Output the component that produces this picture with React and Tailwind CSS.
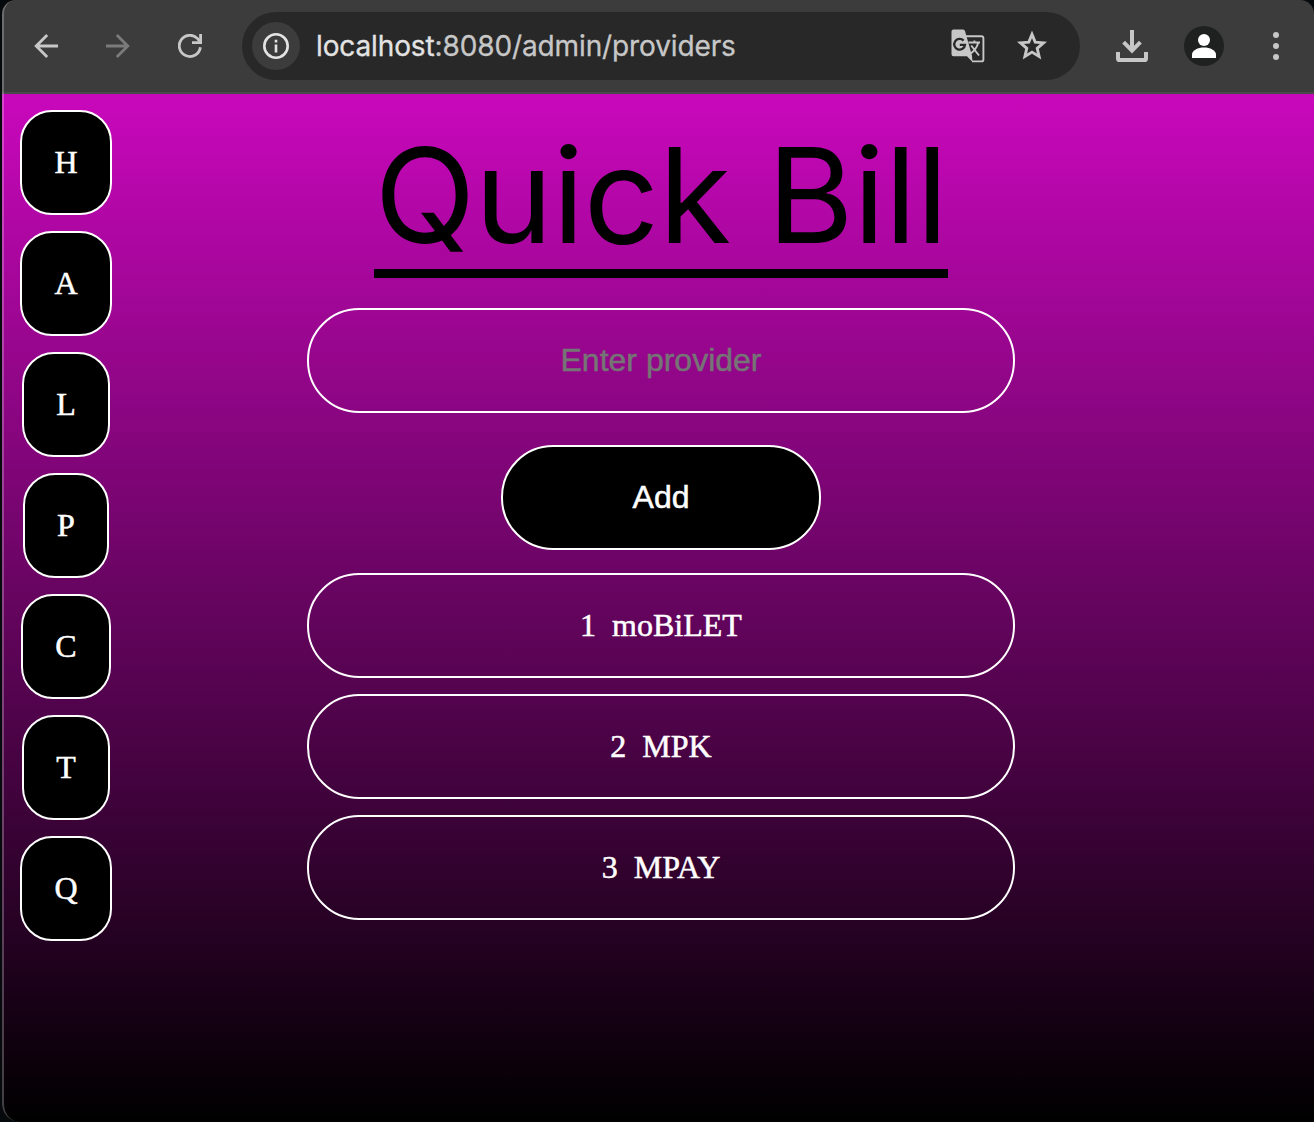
const NAV = ["H", "A", "L", "P", "C", "T", "Q"];
const PROVIDERS = ["moBiLET", "MPK", "MPAY"];

function BackIcon({ className }) {
  return (
    <svg viewBox="0 0 24 24" className={className} fill="none" stroke="currentColor" strokeWidth="2.8">
      <path d="M24 12H2M13.2 1L2.2 12l11 11" />
    </svg>
  );
}

function ReloadIcon() {
  return (
    <svg viewBox="0 0 24 24" className="size-6 text-[#c7c7c7]" fill="none" stroke="currentColor" strokeWidth="2.8">
      <path d="M22.4 13.3A10.6 10.6 0 1 1 19.6 4.600L21.800 7.400" />
      <path d="M22.600 0v8.600H14" />
    </svg>
  );
}

function InfoIcon() {
  return (
    <svg viewBox="0 0 26 26" className="size-[26px]" fill="none" stroke="#e3e3e3" strokeWidth="2.6">
      <circle cx="13" cy="13" r="11.7" />
      <path d="M13 11.6v7.8M13 6.8v2.6" />
    </svg>
  );
}

function TranslateIcon() {
  return (
    <svg viewBox="0 0 34 34" className="size-[34px]" fill="none" stroke="#c7c7c7">
      <path d="M15 7.200h15.400Q32.400 7.200 32.400 9.200v21.200Q32.400 32.400 30.400 32.400H21" strokeWidth="1.900" />
      <path d="M2.500 .5H12q1.500 0 2 1.500l7 24.800.5 6.200-5.500-5.800H2.500Q.5 27.200.5 25.200V2.500Q.5.5 2.500.5z" fill="#c7c7c7" stroke="none" />
      <path d="M12.600 11.600A5.400 5.400 0 1 0 14 15.800H8.800" stroke="#282828" strokeWidth="2.300" />
      <path d="M17.500 13.500h11.500M23.400 11.500v2M27.200 13.700Q25.500 20.500 18.800 25.200M20.200 16.500L28 26.500" strokeWidth="1.900" />
    </svg>
  );
}

function StarIcon() {
  return (
    <svg viewBox="0 0 32 32" className="size-8" fill="none" stroke="#c7c7c7" strokeWidth="2.9" strokeMiterlimit="10">
      <path d="M16 4.400L19.200 12.100L27.500 12.800L21.200 18.300L23.100 26.400L16 22.100L8.900 26.400L10.800 18.300L4.500 12.800L12.800 12.100z" />
    </svg>
  );
}

function DownloadIcon() {
  return (
    <svg viewBox="0 0 32 32" className="size-8" fill="none" stroke="#c7c7c7" strokeWidth="4">
      <path d="M16 0v20M7.6 12.2L16 20.6l8.4-8.4" />
      <path d="M2 22v6.4Q2 30 3.6 30h24.8Q30 30 30 28.4V22" />
    </svg>
  );
}

function Toolbar() {
  return (
    <header className="flex h-[94px] items-center border-b-2 border-[#4a4a4a] bg-[#3c3c3c] pl-8">
      <BackIcon className="size-6 text-[#c7c7c7]" />
      <BackIcon className="ml-12 size-6 rotate-180 text-[#7b7b7b]" />
      <div className="ml-12">
        <ReloadIcon />
      </div>
      <div className="ml-10 flex h-[68px] w-[838px] items-center rounded-full bg-[#282828] pl-2.5">
        <div className="flex size-12 items-center justify-center rounded-full bg-[#3c3c3c]">
          <InfoIcon />
        </div>
        <div className="ml-4 w-[635px] whitespace-nowrap font-['Inter',sans-serif] text-[28px] leading-8 tracking-[-0.12px] text-[#c7c7c7] [-webkit-text-stroke:0.3px]">
          <span className="text-[#e3e3e3]">localhost</span>:8080/admin/providers
        </div>
        <TranslateIcon />
        <div className="ml-[31px]">
          <StarIcon />
        </div>
      </div>
      <div className="ml-9">
        <DownloadIcon />
      </div>
      <svg viewBox="0 0 40 40" className="ml-9 size-10">
        <circle cx="20" cy="20" r="20" fill="#1f2120" />
        <circle cx="20" cy="14" r="6" fill="#fff" />
        <path d="M8 32v-3.4C8 24.2 14 21.5 20 21.5s12 2.7 12 7.1V32z" fill="#fff" />
      </svg>
      <svg viewBox="0 0 6 28" className="ml-[49px] h-7 w-1.5" fill="#c7c7c7">
        <circle cx="3" cy="3" r="3" />
        <circle cx="3" cy="14" r="3" />
        <circle cx="3" cy="25" r="3" />
      </svg>
    </header>
  );
}

export default function App() {
  return (
    <div className="h-[1122px] w-[1314px] overflow-hidden bg-[#070a0d] pl-0.5">
      <div className="relative flex h-full flex-col overflow-hidden rounded-t-[14px] rounded-bl-[18px]">
        <Toolbar />
        <div className="flex flex-1 bg-linear-to-b/srgb from-[#c908bc] to-black pt-4 font-['Liberation_Serif',serif] text-[32px] leading-[37px] text-white [-webkit-text-stroke:0.5px]">
          <nav className="ml-[18px] flex w-[92px] flex-col items-center gap-4">
            {NAV.map((letter) => (
              <button key={letter} className="h-[105px] rounded-[32px] border-2 border-white bg-black px-8">
                {letter}
              </button>
            ))}
          </nav>
          <main className="ml-[195px] flex w-[708px] flex-col items-center">
            <h1 className="mt-[17px] flex h-[151px] items-start justify-center whitespace-nowrap border-b-[9px] border-black font-['Inter',sans-serif] text-[132px] leading-[136px] tracking-[-0.5px] text-black [-webkit-text-stroke:0px]">
              Quick Bill
            </h1>
            <input
              placeholder="Enter provider"
              className="mt-[30px] h-[105px] w-full shrink-0 rounded-[52px] border-2 border-white bg-transparent text-center font-['Liberation_Sans',sans-serif] text-[32px] placeholder:text-[#757575] placeholder:opacity-100"
            />
            <button className="mt-8 h-[105px] w-80 shrink-0 rounded-[52px] border-2 border-white bg-black font-['Liberation_Sans',sans-serif]">
              Add
            </button>
            <ul className="mt-[23px] flex w-full flex-col gap-4">
              {PROVIDERS.map((name, i) => (
                <li key={name} className="flex h-[105px] items-center justify-center gap-4 rounded-[52px] border-2 border-white">
                  <span>{i + 1}</span>
                  <span>{name}</span>
                </li>
              ))}
            </ul>
          </main>
        </div>
        <div className="pointer-events-none absolute inset-0 rounded-tl-[14px] rounded-bl-[18px] border-l-2 border-white/25" />
      </div>
    </div>
  );
}
